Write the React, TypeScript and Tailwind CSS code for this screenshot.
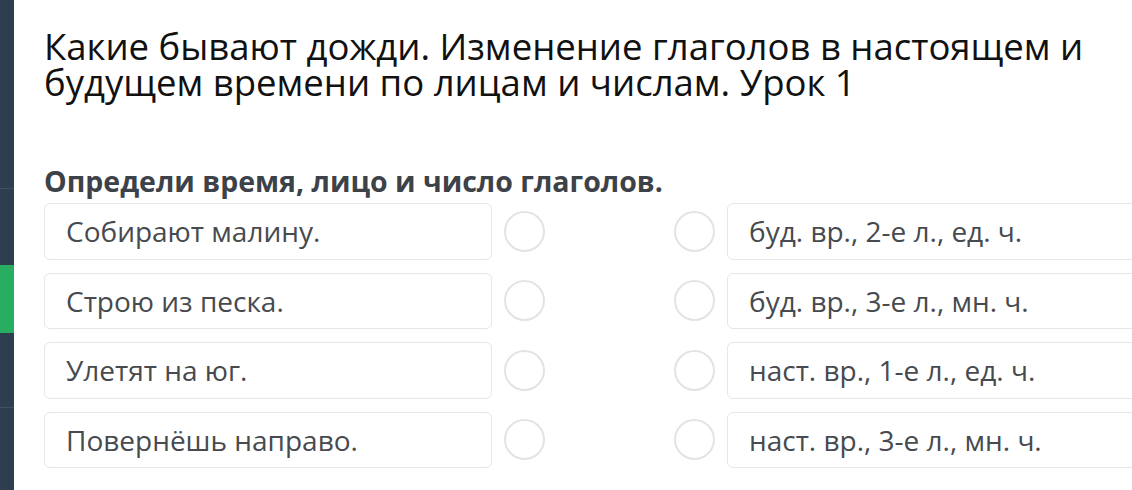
import React from "react";

const LEFT = ["Собирают малину.", "Строю из песка.", "Улетят на юг.", "Повернёшь направо."];
const RIGHT = ["буд. вр., 2-е л., ед. ч.", "буд. вр., 3-е л., мн. ч.", "наст. вр., 1-е л., ед. ч.", "наст. вр., 3-е л., мн. ч."];

const Circle = () => (
  <div className="w-[41px] h-[41px] shrink-0 rounded-full border-2 border-[#e3e3e3] bg-white" />
);

export default function App() {
  return (
    <div
      className="w-[1132px] h-[490px] flex bg-white overflow-hidden"
      style={{ fontFamily: '"Open Sans", "Noto Sans", sans-serif' }}
    >
      {/* sidebar strip */}
      <div className="w-[14px] shrink-0 flex flex-col bg-[#2c3e50]">
        <div className="h-[189px] border-b border-[#3e5064]" />
        <div className="h-[76px]" />
        <div className="h-[68px] bg-[#27ae60]" />
        <div className="h-[75px] border-b border-[#3e5064]" />
        <div className="flex-1" />
      </div>

      <div className="flex-1 pl-[30px] pt-[28px]">
        <h1 className="text-[36.5px] leading-[36px] text-[#111] font-normal">
          Какие бывают дожди. Изменение глаголов в настоящем и
          <br />
          будущем времени по лицам и числам. Урок 1
        </h1>

        <p className="mt-[65px] text-[28.5px] leading-[32px] font-bold text-[#3d4248]">
          Определи время, лицо и число глаголов.
        </p>

        <div className="mt-[6px] flex flex-col gap-[13px]">
          {LEFT.map((l, i) => (
            <div key={i} className="flex items-center h-[56.5px]">
              <div className="w-[448px] h-full shrink-0 flex items-center pl-[21px] border border-[#e6e6e6] rounded-[6px] text-[28px] text-[#474a4e]">
                {l}
              </div>
              <div className="ml-[12px]">
                <Circle />
              </div>
              <div className="ml-[129px]">
                <Circle />
              </div>
              <div className="ml-[12px] w-[440px] h-full shrink-0 flex items-center pl-[21px] border border-[#e6e6e6] rounded-[6px] text-[28px] text-[#474a4e]">
                {RIGHT[i]}
              </div>
            </div>
          ))}
        </div>
      </div>
    </div>
  );
}
